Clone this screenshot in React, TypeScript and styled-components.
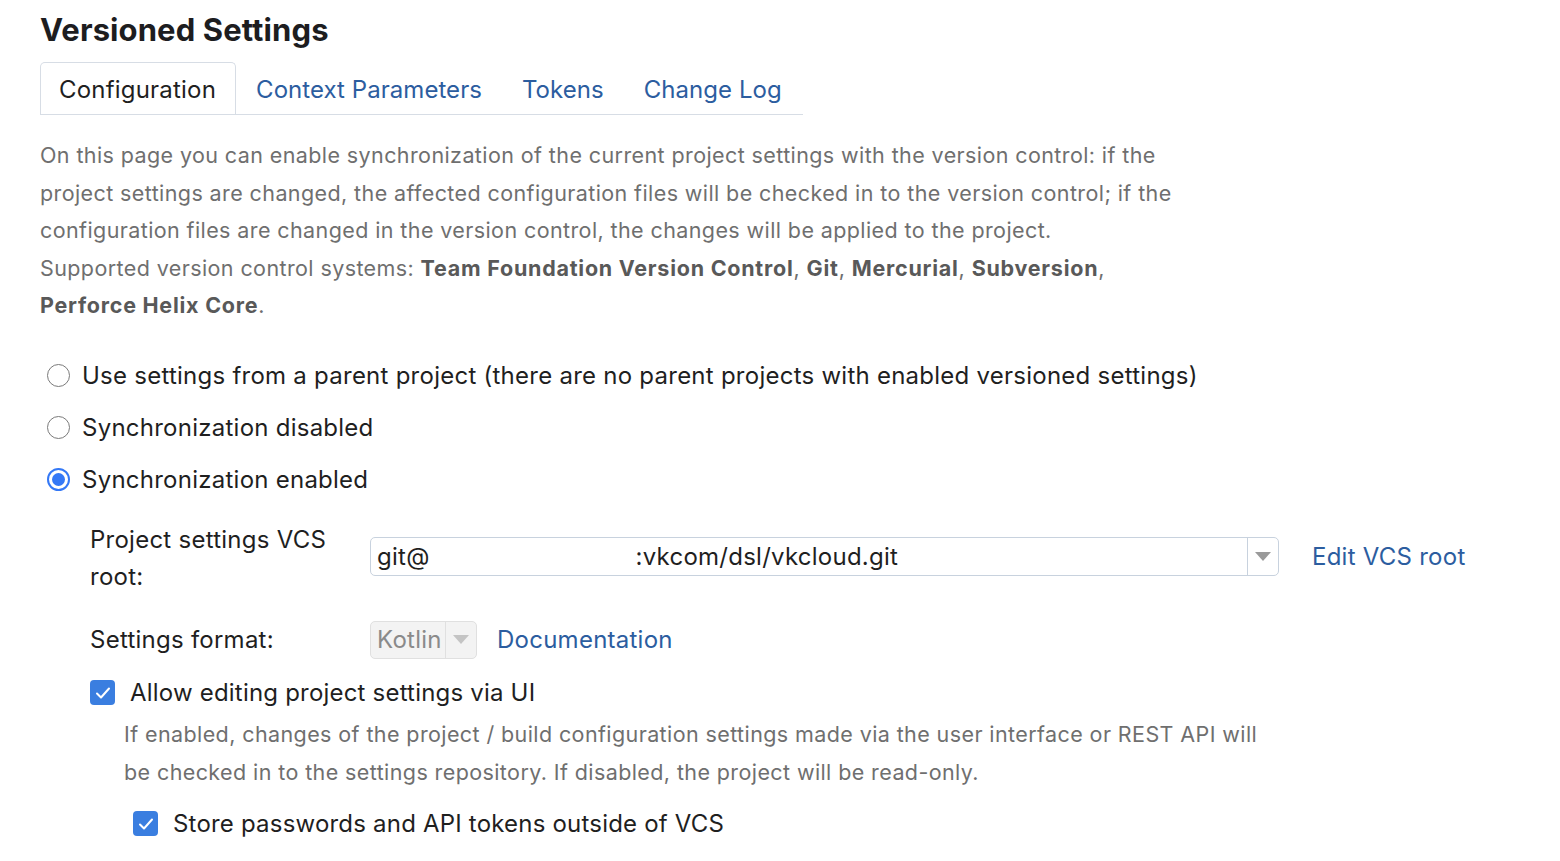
import React from "react";
import styled, { createGlobalStyle } from "styled-components";

const Global = createGlobalStyle`
  html, body { margin: 0; padding: 0; background: #fff; }
  body { font-family: Inter, "Noto Sans", "Liberation Sans", sans-serif; color: #1f1f1f; }
`;

const Page = styled.div`
  padding: 10px 40px 0 40px;
  width: 1560px;
  box-sizing: border-box;
`;

const Title = styled.h1`
  margin: 0;
  font-size: 31px;
  line-height: 40px;
  font-weight: 700;
  letter-spacing: 0.1px;
  color: #1d1d1f;
`;

const TabBar = styled.div`
  display: flex;
  width: 763px;
  margin-top: 12px;
  border-bottom: 1px solid #d7dde5;
  height: 52px;
`;

const Tab = styled.div<{ $active?: boolean }>`
  display: flex;
  flex: none;
  align-items: center;
  white-space: nowrap;
  padding: 2px 19px 0 ${(p) => (p.$active ? "18px" : "19px")};
  font-size: 24px;
  letter-spacing: ${(p) => (p.$active ? "0.2px" : "0.05px")};
  color: ${(p) => (p.$active ? "#1f1f1f" : "#2c5d9f")};
  border: 1px solid ${(p) => (p.$active ? "#d7dde5" : "transparent")};
  border-bottom: none;
  border-radius: 5px 5px 0 0;
  background: #fff;
  margin-bottom: -1px;
  height: 52px;
  box-sizing: border-box;
`;

const Intro = styled.p`
  margin: 22px 0 0 0;
  font-size: 21.5px;
  line-height: 37.5px;
  letter-spacing: 0.4px;
  color: #6f6f6f;
  white-space: nowrap;
  b { color: #595959; font-weight: 700; letter-spacing: 0.75px; }
`;

const RadioList = styled.div`
  display: flex;
  flex-direction: column;
  margin-top: 25px;
  margin-left: 7px;
`;

const RadioRow = styled.label`
  display: flex;
  align-items: center;
  gap: 12px;
  height: 52px;
  font-size: 24px;
  letter-spacing: 0.25px;
  color: #1f1f1f;
`;

const RadioDot = styled.span<{ $on?: boolean }>`
  width: 23px;
  height: 23px;
  border-radius: 50%;
  box-sizing: border-box;
  border: ${(p) => (p.$on ? "2px solid #3478f6" : "1.5px solid #7a7a7a")};
  display: flex;
  align-items: center;
  justify-content: center;
  flex: none;
  &::after {
    content: "";
    width: 13px;
    height: 13px;
    border-radius: 50%;
    background: ${(p) => (p.$on ? "#3478f6" : "transparent")};
  }
`;

const Section = styled.div`
  margin-left: 50px;
  margin-top: 15px;
`;

const FieldGrid = styled.div`
  display: grid;
  grid-template-columns: 280px auto;
  row-gap: 26px;
  align-items: start;
`;

const FieldLabel = styled.div`
  font-size: 24px;
  line-height: 37px;
  letter-spacing: 0.25px;
  color: #1f1f1f;
  width: 250px;
`;

const FieldControls = styled.div<{ $top?: number; $gap: number }>`
  display: flex;
  align-items: center;
  gap: ${(p) => p.$gap}px;
  padding-top: ${(p) => p.$top ?? 0}px;
`;

const Select = styled.div<{ $disabled?: boolean; $w: number }>`
  display: flex;
  align-items: stretch;
  width: ${(p) => p.$w}px;
  height: ${(p) => (p.$disabled ? 38 : 39)}px;
  box-sizing: border-box;
  border: 1px solid ${(p) => (p.$disabled ? "#e0e0e0" : "#c8d2de")};
  border-radius: 5px;
  background: ${(p) => (p.$disabled ? "#f3f3f3" : "#fff")};
  color: ${(p) => (p.$disabled ? "#8a8a8a" : "#1f1f1f")};
  font-size: 24px;
  letter-spacing: 0.25px;
`;

const SelectValue = styled.div`
  flex: 1;
  display: flex;
  align-items: center;
  padding-left: 6px;
  white-space: pre;
  overflow: hidden;
`;

const Hidden = styled.span`
  display: inline-block;
  width: 206px;
`;

const SelectArrow = styled.div<{ $disabled?: boolean }>`
  width: 30px;
  display: flex;
  align-items: center;
  justify-content: center;
  border-left: 1px solid ${(p) => (p.$disabled ? "#e0e0e0" : "#c8d2de")};
  &::after {
    content: "";
    border-left: 8px solid transparent;
    border-right: 8px solid transparent;
    border-top: 9px solid ${(p) => (p.$disabled ? "#c4c4c4" : "#9a9a9a")};
  }
`;

const Link = styled.a`
  color: #2c5d9f;
  font-size: 24px;
  letter-spacing: 0.25px;
  text-decoration: none;
`;

const CheckRow = styled.label<{ $indent?: number; $top: number }>`
  display: flex;
  align-items: center;
  gap: 15px;
  margin-left: ${(p) => p.$indent ?? 0}px;
  margin-top: ${(p) => p.$top}px;
  font-size: 24px;
  letter-spacing: 0.2px;
  color: #1f1f1f;
  height: 32px;
`;

const Box = styled.span`
  width: 25px;
  height: 25px;
  border-radius: 4px;
  background: #3a7ee0;
  display: flex;
  align-items: center;
  justify-content: center;
  flex: none;
`;

const Help = styled.p`
  margin: 6px 0 0 34px;
  font-size: 21.5px;
  line-height: 38px;
  letter-spacing: 0.4px;
  color: #6f6f6f;
  white-space: nowrap;
`;

const Check = () => (
  <Box>
    <svg width="16" height="14" viewBox="0 0 16 14" fill="none">
      <path d="M2 7.5 L6 11.5 L14 2.5" stroke="#fff" strokeWidth="2" strokeLinecap="round" strokeLinejoin="round" />
    </svg>
  </Box>
);

export default function App() {
  return (
    <Page>
      <Global />
      <Title>Versioned Settings</Title>
      <TabBar>
        <Tab $active>Configuration</Tab>
        <Tab>Context Parameters</Tab>
        <Tab>Tokens</Tab>
        <Tab>Change Log</Tab>
      </TabBar>
      <Intro>
        On this page you can enable synchronization of the current project settings with the version control: if the
        <br />
        project settings are changed, the affected configuration files will be checked in to the version control; if the
        <br />
        configuration files are changed in the version control, the changes will be applied to the project.
        <br />
        Supported version control systems: <b>Team Foundation Version Control</b>, <b>Git</b>, <b>Mercurial</b>,{" "}
        <b>Subversion</b>,
        <br />
        <b>Perforce Helix Core</b>.
      </Intro>
      <RadioList>
        <RadioRow>
          <RadioDot />
          Use settings from a parent project (there are no parent projects with enabled versioned settings)
        </RadioRow>
        <RadioRow>
          <RadioDot />
          Synchronization disabled
        </RadioRow>
        <RadioRow>
          <RadioDot $on />
          Synchronization enabled
        </RadioRow>
      </RadioList>
      <Section>
        <FieldGrid>
          <FieldLabel>Project settings VCS root:</FieldLabel>
          <FieldControls $top={16} $gap={33}>
            <Select $w={909}>
              <SelectValue>
                git@<Hidden />:vkcom/dsl/vkcloud.git
              </SelectValue>
              <SelectArrow />
            </Select>
            <Link href="#">Edit VCS root</Link>
          </FieldControls>
          <FieldLabel>Settings format:</FieldLabel>
          <FieldControls $gap={20}>
            <Select $w={107} $disabled>
              <SelectValue>Kotlin</SelectValue>
              <SelectArrow $disabled />
            </Select>
            <Link href="#">Documentation</Link>
          </FieldControls>
        </FieldGrid>
        <CheckRow $top={18}>
          <Check />
          Allow editing project settings via UI
        </CheckRow>
        <Help>
          If enabled, changes of the project / build configuration settings made via the user interface or REST API will
          <br />
          be checked in to the settings repository. If disabled, the project will be read-only.
        </Help>
        <CheckRow $indent={43} $top={17}>
          <Check />
          Store passwords and API tokens outside of VCS
        </CheckRow>
      </Section>
    </Page>
  );
}
